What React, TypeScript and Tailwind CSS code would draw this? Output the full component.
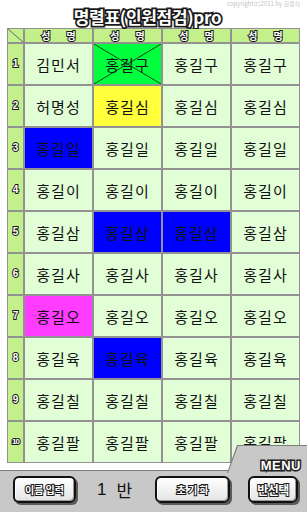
import React from "react";

const names: string[][] = [
  ["김민서", "홍길구", "홍길구", "홍길구"],
  ["허명성", "홍길심", "홍길심", "홍길심"],
  ["홍길일", "홍길일", "홍길일", "홍길일"],
  ["홍길이", "홍길이", "홍길이", "홍길이"],
  ["홍길삼", "홍길삼", "홍길삼", "홍길삼"],
  ["홍길사", "홍길사", "홍길사", "홍길사"],
  ["홍길오", "홍길오", "홍길오", "홍길오"],
  ["홍길육", "홍길육", "홍길육", "홍길육"],
  ["홍길칠", "홍길칠", "홍길칠", "홍길칠"],
  ["홍길팔", "홍길팔", "홍길팔", "홍길팔"],
];

const special: Record<string, string> = {
  "0-1": "bg-[#00ff3c]",
  "1-1": "bg-[#ffff3c]",
  "2-0": "bg-[#0000ff]",
  "4-1": "bg-[#0000ff]",
  "4-2": "bg-[#0000ff]",
  "6-0": "bg-[#ff3cff]",
  "7-1": "bg-[#0000ff]",
};

const outline = "text-white [paint-order:stroke_fill] [-webkit-text-stroke:2px_#1a1a1a] font-bold";

function Btn({ w, label, cls }: { w: string; label: string; cls: string }) {
  return (
    <div
      className={`${w} h-[27px] rounded-[6px] border-2 border-[#111] bg-gradient-to-b from-[#ffffff] to-[#e4e4e4] shadow-[inset_-1px_-1px_0_#9a9a9a,inset_1px_1px_0_#ffffff,2px_2px_0_#5a5a5a] flex items-center justify-center`}
    >
      <span className={`${cls} ${outline} leading-none`}>{label}</span>
    </div>
  );
}

export default function App() {
  return (
    <div
      className="relative w-[307px] h-[512px] bg-white overflow-hidden"
      style={{ fontFamily: '"Noto Sans CJK KR", "Noto Sans", sans-serif' }}
    >
      <div className="absolute top-[1px] right-[7px] text-[6px] leading-none text-[#c4c4c4]">
        copyright(c)2011 by 김정식
      </div>
      <div className="h-[28px] flex items-center justify-center pr-[12px] pt-[4px]">
        <span className="text-[17px] leading-none text-white [paint-order:stroke_fill] [-webkit-text-stroke:3.5px_#1a1a1a] font-bold tracking-[-0.3px]">
          명렬표(인원점검)pro
        </span>
      </div>

      <div className="ml-[7px] w-[293px] bg-[#929292] p-[1px] grid grid-cols-[15px_repeat(4,67px)] grid-rows-[13px_repeat(10,40px)] gap-[2px]">
        <div className="relative bg-[#c4f08c]">
          <svg className="absolute inset-0" width="15" height="13">
            <line x1="0" y1="0" x2="15" y2="13" stroke="#6a6a6a" strokeWidth="1" />
          </svg>
        </div>
        {[0, 1, 2, 3].map((i) => (
          <div key={i} className="bg-[#c4f08c] flex items-center justify-center gap-[16px]">
            <span className={`text-[10px] leading-none ${outline}`}>성</span>
            <span className={`text-[10px] leading-none ${outline}`}>명</span>
          </div>
        ))}
        {names.map((row, r) => (
          <React.Fragment key={r}>
            <div className="bg-[#c4f08c] flex items-center justify-center">
              <span
                className={`${r === 9 ? "text-[8px] tracking-[-1px]" : "text-[10px]"} leading-none ${outline}`}
                style={{ fontFamily: '"Liberation Sans", sans-serif' }}
              >
                {r + 1}
              </span>
            </div>
            {row.map((n, c) => {
              const key = `${r}-${c}`;
              const bg = special[key] ?? "bg-[#e2fed6]";
              return (
                <div key={c} className={`relative ${bg} flex items-center justify-center`}>
                  {key === "0-1" && (
                    <svg className="absolute inset-0" width="67" height="40">
                      <line x1="0" y1="0" x2="67" y2="40" stroke="#111" strokeWidth="0.8" />
                      <line x1="67" y1="0" x2="0" y2="40" stroke="#111" strokeWidth="0.8" />
                    </svg>
                  )}
                  <span className="relative text-[15px] leading-none text-[#111] tracking-[1px]">{n}</span>
                </div>
              );
            })}
          </React.Fragment>
        ))}
      </div>

      <div className="relative mt-[7px] h-[42px] bg-[#c8c8c8] border-t border-[#7c7c7c]">
        <div className="absolute right-0 top-[-26px] w-[80px] h-[28px]">
          <div className="absolute inset-0 bg-[#7c7c7c] [clip-path:polygon(10px_0,100%_0,100%_100%,0_100%)]" />
          <div className="absolute left-[1px] top-[1px] right-0 bottom-0 bg-[#c8c8c8] [clip-path:polygon(10px_0,100%_0,100%_100%,0_100%)]" />
          <div className="absolute right-[6px] top-[6px]">
            <span
              className="text-[13px] leading-none text-white [paint-order:stroke_fill] [-webkit-text-stroke:3px_#222] font-black tracking-[0.5px]"
              style={{ fontFamily: '"Liberation Sans", sans-serif' }}
            >
              MENU
            </span>
          </div>
        </div>
        <div className="relative flex items-center pl-[13px] pt-[5px]">
          <Btn w="w-[63px]" label="이름 입력" cls="text-[10px]" />
          <div className="ml-[21px] w-[40px] text-[17px] leading-none text-[#111] flex items-center gap-[10px]">
            <span style={{ fontFamily: '"Liberation Sans", sans-serif' }}>1</span>
            <span>반</span>
          </div>
          <div className="ml-[18px]">
            <Btn w="w-[75px]" label="초 기 화" cls="text-[10px]" />
          </div>
          <div className="ml-[18px]">
            <Btn w="w-[50px]" label="반선택" cls="text-[12px] tracking-[-0.5px]" />
          </div>
        </div>
      </div>
    </div>
  );
}
